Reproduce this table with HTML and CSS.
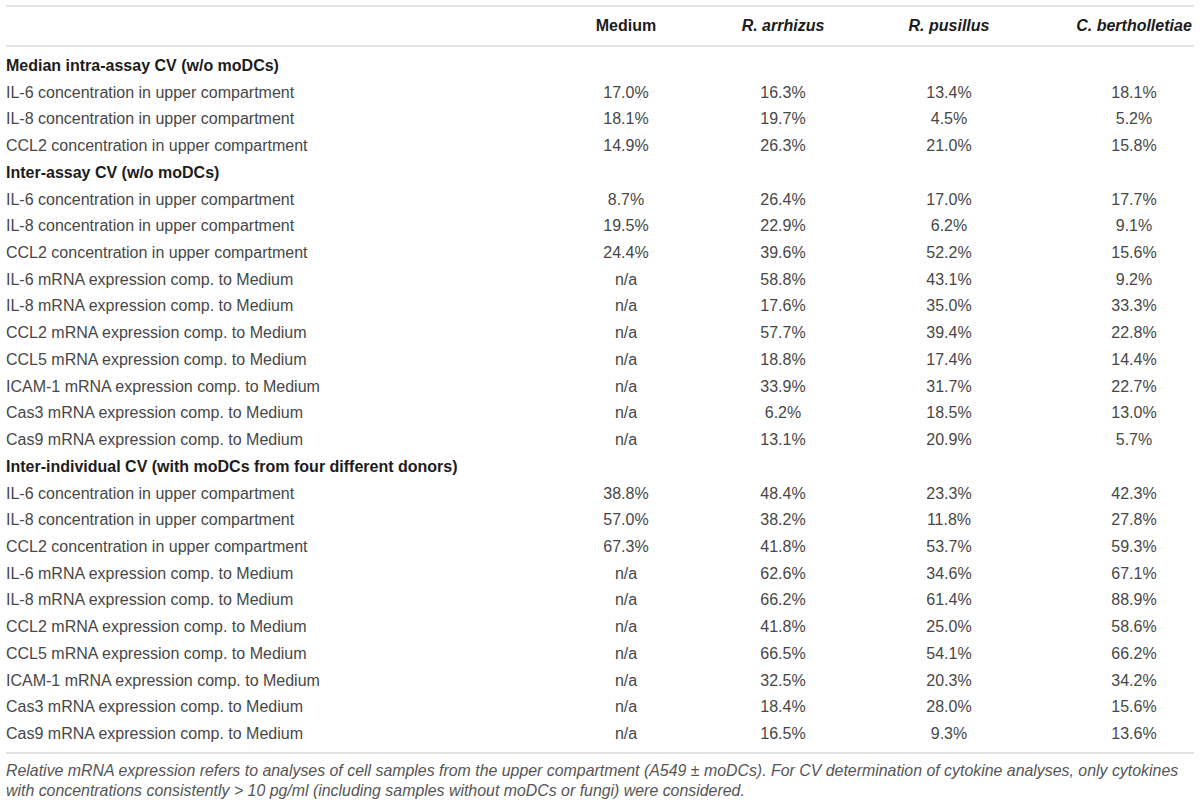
FILE: index.html
```html
<!DOCTYPE html>
<html lang="en">
<head>
<meta charset="utf-8">
<title>CV table</title>
<link rel="stylesheet" href="styles.css">
</head>
<body>
<div class="wrap">
<table class="cv">
<colgroup>
<col class="c1"><col class="c2"><col class="c3"><col class="c4"><col class="c5">
</colgroup>
<thead>
<tr><th></th><th>Medium</th><th><i>R. arrhizus</i></th><th><i>R. pusillus</i></th><th class="last"><i>C. bertholletiae</i></th></tr>
</thead>
<tbody>
<tr class="sec first"><td colspan="5">Median intra-assay CV (w/o moDCs)</td></tr>
<tr><td>IL-6 concentration in upper compartment</td><td>17.0%</td><td>16.3%</td><td>13.4%</td><td class="last">18.1%</td></tr>
<tr><td>IL-8 concentration in upper compartment</td><td>18.1%</td><td>19.7%</td><td>4.5%</td><td class="last">5.2%</td></tr>
<tr><td>CCL2 concentration in upper compartment</td><td>14.9%</td><td>26.3%</td><td>21.0%</td><td class="last">15.8%</td></tr>
<tr class="sec"><td colspan="5">Inter-assay CV (w/o moDCs)</td></tr>
<tr><td>IL-6 concentration in upper compartment</td><td>8.7%</td><td>26.4%</td><td>17.0%</td><td class="last">17.7%</td></tr>
<tr><td>IL-8 concentration in upper compartment</td><td>19.5%</td><td>22.9%</td><td>6.2%</td><td class="last">9.1%</td></tr>
<tr><td>CCL2 concentration in upper compartment</td><td>24.4%</td><td>39.6%</td><td>52.2%</td><td class="last">15.6%</td></tr>
<tr><td>IL-6 mRNA expression comp. to Medium</td><td>n/a</td><td>58.8%</td><td>43.1%</td><td class="last">9.2%</td></tr>
<tr><td>IL-8 mRNA expression comp. to Medium</td><td>n/a</td><td>17.6%</td><td>35.0%</td><td class="last">33.3%</td></tr>
<tr><td>CCL2 mRNA expression comp. to Medium</td><td>n/a</td><td>57.7%</td><td>39.4%</td><td class="last">22.8%</td></tr>
<tr><td>CCL5 mRNA expression comp. to Medium</td><td>n/a</td><td>18.8%</td><td>17.4%</td><td class="last">14.4%</td></tr>
<tr><td>ICAM-1 mRNA expression comp. to Medium</td><td>n/a</td><td>33.9%</td><td>31.7%</td><td class="last">22.7%</td></tr>
<tr><td>Cas3 mRNA expression comp. to Medium</td><td>n/a</td><td>6.2%</td><td>18.5%</td><td class="last">13.0%</td></tr>
<tr><td>Cas9 mRNA expression comp. to Medium</td><td>n/a</td><td>13.1%</td><td>20.9%</td><td class="last">5.7%</td></tr>
<tr class="sec"><td colspan="5">Inter-individual CV (with moDCs from four different donors)</td></tr>
<tr><td>IL-6 concentration in upper compartment</td><td>38.8%</td><td>48.4%</td><td>23.3%</td><td class="last">42.3%</td></tr>
<tr><td>IL-8 concentration in upper compartment</td><td>57.0%</td><td>38.2%</td><td>11.8%</td><td class="last">27.8%</td></tr>
<tr><td>CCL2 concentration in upper compartment</td><td>67.3%</td><td>41.8%</td><td>53.7%</td><td class="last">59.3%</td></tr>
<tr><td>IL-6 mRNA expression comp. to Medium</td><td>n/a</td><td>62.6%</td><td>34.6%</td><td class="last">67.1%</td></tr>
<tr><td>IL-8 mRNA expression comp. to Medium</td><td>n/a</td><td>66.2%</td><td>61.4%</td><td class="last">88.9%</td></tr>
<tr><td>CCL2 mRNA expression comp. to Medium</td><td>n/a</td><td>41.8%</td><td>25.0%</td><td class="last">58.6%</td></tr>
<tr><td>CCL5 mRNA expression comp. to Medium</td><td>n/a</td><td>66.5%</td><td>54.1%</td><td class="last">66.2%</td></tr>
<tr><td>ICAM-1 mRNA expression comp. to Medium</td><td>n/a</td><td>32.5%</td><td>20.3%</td><td class="last">34.2%</td></tr>
<tr><td>Cas3 mRNA expression comp. to Medium</td><td>n/a</td><td>18.4%</td><td>28.0%</td><td class="last">15.6%</td></tr>
<tr class="final"><td>Cas9 mRNA expression comp. to Medium</td><td>n/a</td><td>16.5%</td><td>9.3%</td><td class="last">13.6%</td></tr>
</tbody>
</table>
<p class="note">Relative mRNA expression refers to analyses of cell samples from the upper compartment (A549 ± moDCs). For CV determination of cytokine analyses, only cytokines with concentrations consistently &gt; 10 pg/ml (including samples without moDCs or fungi) were considered.</p>
</div>
</body>
</html>
```

FILE: styles.css
```css
html, body {
  margin: 0;
  padding: 0;
  background: #ffffff;
}

.wrap {
  width: 1188px;
  padding: 5px 6px 0 6px;
  font-family: "Liberation Sans", Arial, sans-serif;
}

.cv {
  width: 1188px;
  table-layout: fixed;
  border-collapse: collapse;
  border-spacing: 0;
  font-size: 16px;
  color: #474747;
}

.c1 { width: 542px; }
.c2 { width: 156px; }
.c3 { width: 158px; }
.c4 { width: 174px; }
.c5 { width: 158px; }

.cv thead tr {
  border-top: 2px solid #e3e3e3;
  border-bottom: 2px solid #e3e3e3;
}

.cv th {
  height: 38px;
  padding: 0;
  font-weight: bold;
  color: #1c1c1c;
  text-align: center;
  line-height: 38px;
  white-space: nowrap;
}

.cv td {
  padding: 0;
  height: 26.72px;
  line-height: 26.72px;
  text-align: center;
  white-space: nowrap;
}

.cv td:first-child {
  text-align: left;
}

.cv .last {
  padding-left: 38px;
}

.cv tr.sec td {
  font-weight: bold;
  color: #1c1c1c;
}

.cv tr.first td {
  padding-top: 6px;
}

.cv tr.final td {
  padding-bottom: 4px;
}

.cv tbody tr.final {
  border-bottom: 2px solid #e3e3e3;
}

.note {
  margin: 7px 0 0 0;
  font-size: 15.9px;
  line-height: 20px;
  font-style: italic;
  color: #555555;
}
```
